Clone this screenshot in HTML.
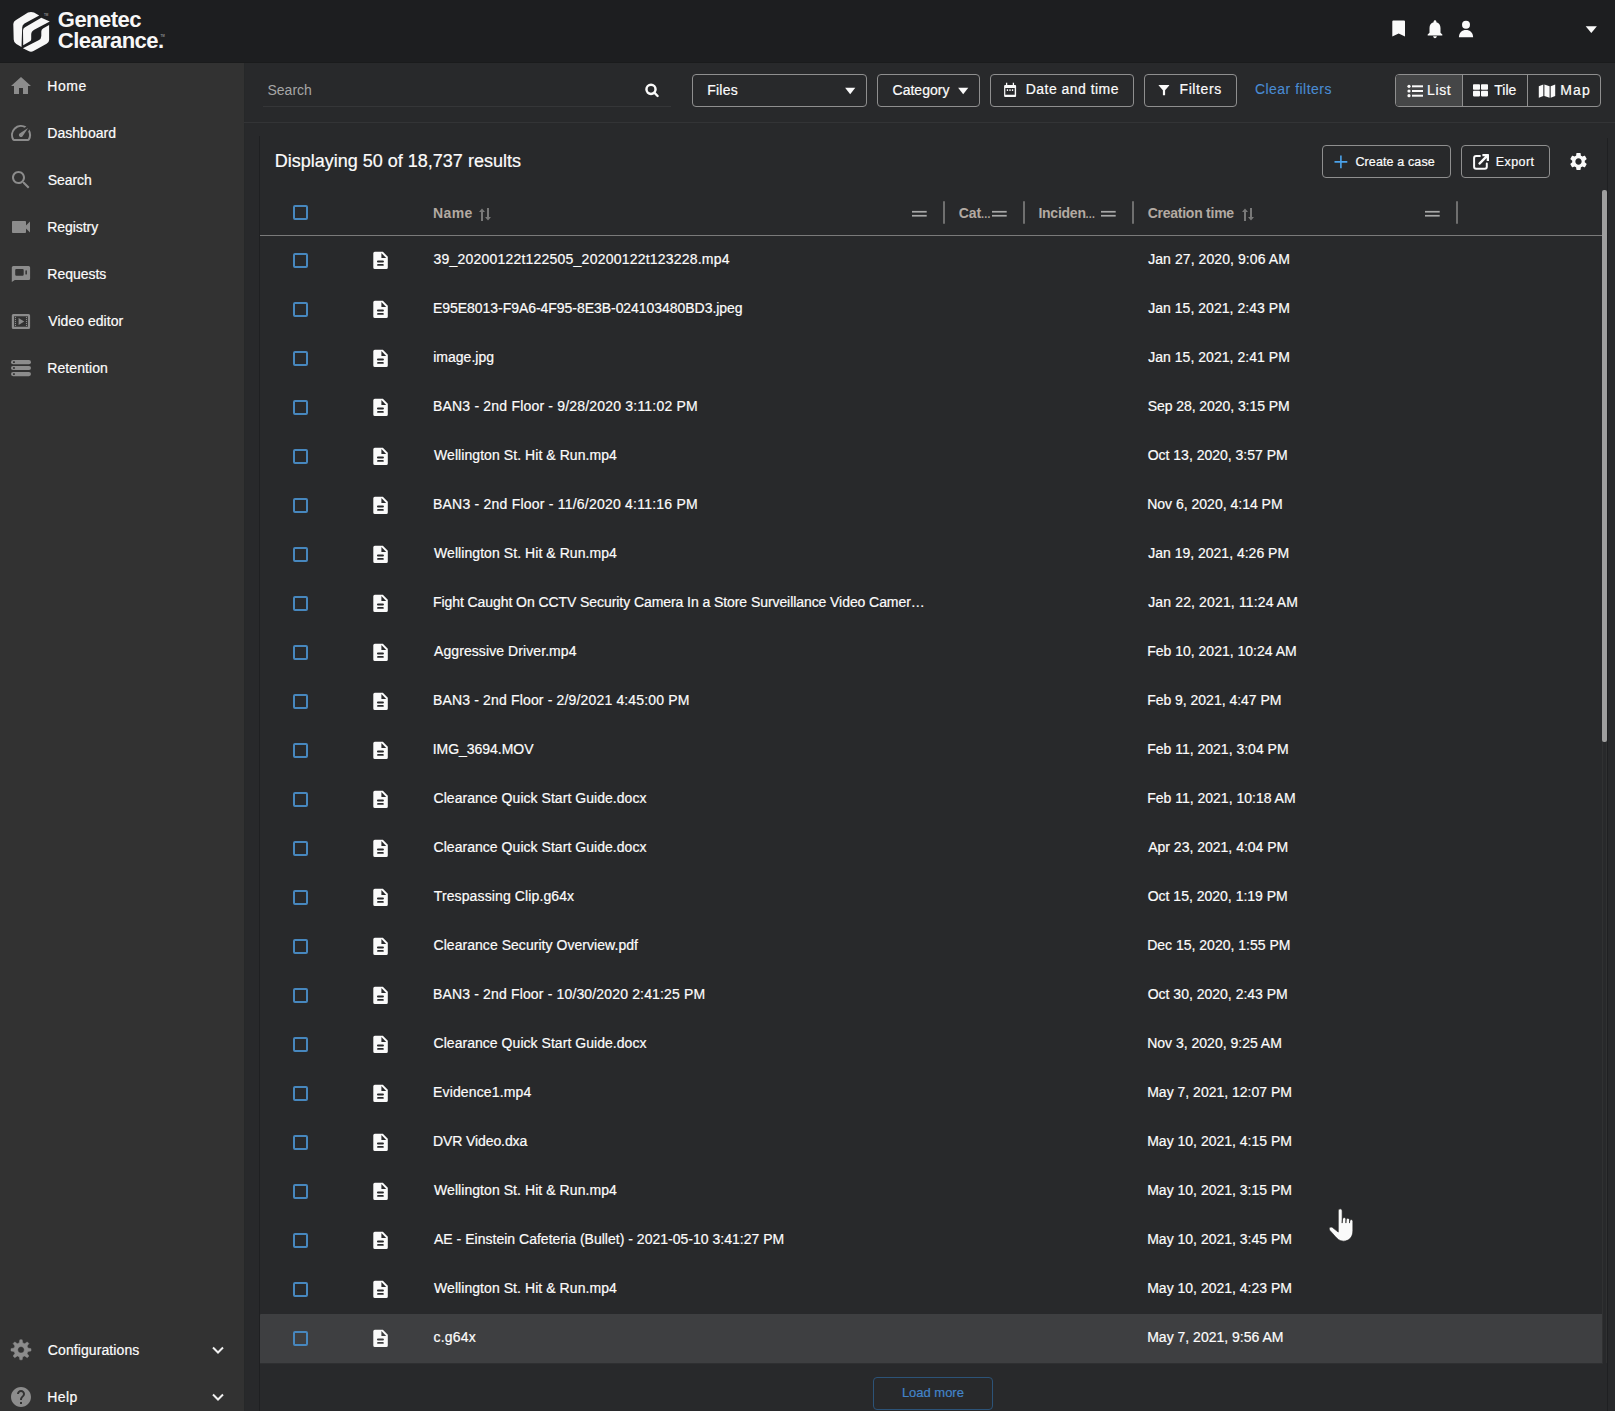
<!DOCTYPE html>
<html><head><meta charset="utf-8"><style>
*{box-sizing:border-box;margin:0;padding:0}
html,body{width:1615px;height:1411px;overflow:hidden;background:#28292b;font-family:"Liberation Sans",sans-serif;color:#fcfcfc}
.a{position:absolute}
.t{position:absolute;white-space:nowrap;line-height:1;-webkit-text-stroke:0.2px currentColor}
.cb{position:absolute;left:293px;width:15.3px;height:15.3px;border:2px solid #4787be;border-radius:2px}
.sep{position:absolute;top:201px;width:2px;height:23px;background:#6f6f6f;border-radius:1px}
.eq{position:absolute;top:211px;width:14.7px;height:5.6px;border-top:1.6px solid #a4a4a4;border-bottom:1.6px solid #a4a4a4}
.btn{position:absolute;border:1px solid #8f8f8f;border-radius:4px}

</style></head><body>
<div class="a" style="left:0;top:0;width:1615px;height:63px;background:#1d1e20;border-bottom:1px solid #1a1b1c"></div>
<svg class="a" style="left:8px;top:6px" width="50" height="50" viewBox="0 0 50 50">
<g fill="#f7f7f7">
<path d="M20 6.6 Q23 5.2 26 6.6 L31.2 9.6 L16.5 17.6 Q14.2 19 14.2 21.5 L13.5 41.1 L8.3 38 Q5.7 36.4 5.7 33.5 L5.3 18 Q5.3 15.3 8 14 Z"/>
<path d="M33.3 11.7 L41.8 15.6 L26.2 23.8 Q23.2 25.4 23.2 28.5 L23.2 33.2 Q23.2 34.6 22 35.3 L15.2 39.2 L15 24.5 Q15 22.3 17 21.2 Z"/>
<path d="M14.9 42.2 L30.6 34.3 Q33.3 32.9 33.3 30 L33.3 25.5 Q33.3 23.6 35 22.6 L41.1 19 L41.1 34 Q41.1 36.4 38.6 37.8 L25.5 45 Q23 46.3 20.5 45 Z"/>
</g>
<text x="36" y="10.3" font-size="3" font-family="Liberation Sans" font-weight="700" fill="#8a8a8a">TM</text>
</svg>
<svg class="a" style="left:158px;top:32px" width="10" height="6" viewBox="0 0 10 6"><text x="2.4" y="4.8" font-size="3" font-family="Liberation Sans" font-weight="700" fill="#8a8a8a">TM</text></svg>

<div class="t" style="left:57.85px;top:8.78px;font-size:22px;color:#f7f7f7;font-weight:700;-webkit-text-stroke:0;letter-spacing:-0.550px;">Genetec</div>
<div class="t" style="left:57.85px;top:29.58px;font-size:22px;color:#f7f7f7;font-weight:700;-webkit-text-stroke:0;letter-spacing:-0.567px;">Clearance.</div>
<svg class="a" style="left:1388px;top:17px" width="24" height="24" viewBox="0 0 24 24"><path fill="#fafafa" d="M4.3 4.6Q4.3 3.6 5.3 3.6H16Q17 3.6 17 4.6V19.6L10.65 16.5 4.3 19.6Z"/></svg>
<svg class="a" style="left:1423.8px;top:17.8px" width="22" height="22" viewBox="0 0 24 24"><path fill="#fafafa" d="M12 22c1.1 0 2-.9 2-2h-4c0 1.1.89 2 2 2zm6-6v-5c0-3.07-1.64-5.64-4.5-6.32V4c0-.83-.67-1.5-1.5-1.5s-1.5.67-1.5 1.5v.68C7.630 5.36 6 7.92 6 11v5l-2 2v1h16v-1l-2-2z"/></svg>
<svg class="a" style="left:1454px;top:17px" width="24" height="24" viewBox="0 0 24 24"><circle cx="12" cy="7.85" r="4" fill="#fafafa"/><path fill="#fafafa" d="M4.9 20.2C4.9 15.6 8 12.9 12 12.9S19.1 15.6 19.1 20.2Z"/></svg>
<svg class="a" style="left:1580px;top:18px" width="24" height="24" viewBox="0 0 24 24"><path fill="#fafafa" d="M5.7 8.3h11.2l-5.6 6.8z"/></svg>

<div class="a" style="left:0;top:63px;width:244px;height:1348px;background:#323232"></div>
<div class="a" style="left:244px;top:63px;width:1px;height:1348px;background:#262829"></div>
<div class="t" style="left:47.30px;top:79.15px;font-size:14px;letter-spacing:0.517px;">Home</div>
<div class="t" style="left:47.30px;top:126.15px;font-size:14px;letter-spacing:0.031px;">Dashboard</div>
<div class="t" style="left:47.80px;top:173.15px;font-size:14px;letter-spacing:-0.080px;">Search</div>
<div class="t" style="left:47.30px;top:220.15px;font-size:14px;letter-spacing:-0.071px;">Registry</div>
<div class="t" style="left:47.30px;top:267.15px;font-size:14px;letter-spacing:-0.021px;">Requests</div>
<div class="t" style="left:48.30px;top:314.15px;font-size:14px;letter-spacing:0.036px;">Video editor</div>
<div class="t" style="left:47.30px;top:361.15px;font-size:14px;letter-spacing:0.081px;">Retention</div>
<div class="t" style="left:47.80px;top:1343.15px;font-size:14px;letter-spacing:0.092px;">Configurations</div>
<div class="t" style="left:47.30px;top:1390.15px;font-size:14px;letter-spacing:0.383px;">Help</div>
<svg class="a" style="left:9px;top:74px" width="24" height="24" viewBox="0 0 24 24"><path fill="#8c8c8c" d="M10 20v-6h4v6h5v-8h3L12 3 2 12h3v8z"/></svg>
<svg class="a" style="left:9px;top:121px" width="24" height="24" viewBox="0 0 24 24"><path fill="#8c8c8c" d="M20.38 8.57l-1.23 1.85a8 8 0 0 1-.22 7.58H5.07A8 8 0 0 1 15.58 6.85l1.85-1.23A10 10 0 0 0 3.35 19a2 2 0 0 0 1.72 1h13.85a2 2 0 0 0 1.74-1 10 10 0 0 0-.27-10.44zm-9.79 6.84a2 2 0 0 0 2.83 0l5.66-8.49-8.49 5.66a2 2 0 0 0 0 2.83z"/></svg>
<svg class="a" style="left:9px;top:168px" width="24" height="24" viewBox="0 0 24 24"><path fill="#8c8c8c" d="M15.5 14h-.79l-.28-.27C15.41 12.59 16 11.11 16 9.5 16 5.91 13.09 3 9.5 3S3 5.91 3 9.5 5.91 16 9.5 16c1.61 0 3.09-.59 4.23-1.57l.27.28v.79l5 4.99L20.49 19l-4.99-5zm-6 0C7.01 14 5 11.99 5 9.5S7.01 5 9.5 5 14 7.01 14 9.5 11.99 14 9.5 14z"/></svg>
<svg class="a" style="left:9px;top:215px" width="24" height="24" viewBox="0 0 24 24"><path fill="#8c8c8c" d="M17 10.5V7c0-.55-.45-1-1-1H4c-.55 0-1 .45-1 1v10c0 .55.45 1 1 1h12c.55 0 1-.45 1-1v-3.5l4 4v-11l-4 4z"/></svg>
<svg class="a" style="left:9px;top:262px" width="24" height="24" viewBox="0 0 24 24"><path fill="#8c8c8c" fill-rule="evenodd" d="M4.3 4h15.3a1.5 1.5 0 0 1 1.5 1.5v11a1.5 1.5 0 0 1-1.5 1.5H5.8l-3 2.1V5.5a1.5 1.5 0 0 1 1.5-1.5zM7.4 6.9h6.1a1.2 1.2 0 0 1 1.2 1.2v4.4a1.2 1.2 0 0 1-1.2 1.2H7.4a1.2 1.2 0 0 1-1.2-1.2V8.1a1.2 1.2 0 0 1 1.2-1.2zM17.1 8.2h.1a.7.7 0 0 1 .7.7v3a.7.7 0 0 1-.7.7h-.1a.7.7 0 0 1-.7-.7v-3a.7.7 0 0 1 .7-.7z"/></svg>
<svg class="a" style="left:9px;top:309px" width="24" height="24" viewBox="0 0 24 24"><path fill="#8c8c8c" fill-rule="evenodd" d="M4.3 5h15.3a1.5 1.5 0 0 1 1.5 1.5v12a1.5 1.5 0 0 1-1.5 1.5H4.3a1.5 1.5 0 0 1-1.5-1.5v-12A1.5 1.5 0 0 1 4.3 5zM5.1 7.3v10.4h13.8V7.3zM9.6 8.9l5.6 3.6-5.6 3.6z"/><circle cx="6.5" cy="8.4" r="0.6" fill="#8c8c8c"/><circle cx="6.5" cy="10.4" r="0.6" fill="#8c8c8c"/><circle cx="6.5" cy="12.4" r="0.6" fill="#8c8c8c"/><circle cx="6.5" cy="14.4" r="0.6" fill="#8c8c8c"/><circle cx="6.5" cy="16.4" r="0.6" fill="#8c8c8c"/><circle cx="17.5" cy="8.4" r="0.6" fill="#8c8c8c"/><circle cx="17.5" cy="10.4" r="0.6" fill="#8c8c8c"/><circle cx="17.5" cy="12.4" r="0.6" fill="#8c8c8c"/><circle cx="17.5" cy="14.4" r="0.6" fill="#8c8c8c"/><circle cx="17.5" cy="16.4" r="0.6" fill="#8c8c8c"/></svg>
<svg class="a" style="left:9px;top:356px" width="24" height="24" viewBox="0 0 24 24"><g fill="#8c8c8c"><rect x="2" y="4" width="20" height="4.3" rx="2.15"/><rect x="2" y="10" width="20" height="4" rx="2"/><rect x="2" y="16" width="20" height="4.2" rx="2.1"/></g><rect x="4.1" y="5.3" width="1.7" height="1.7" fill="#2e2e2e"/><rect x="4.1" y="11.15" width="1.7" height="1.7" fill="#2e2e2e"/><rect x="4.1" y="17.25" width="1.7" height="1.7" fill="#2e2e2e"/></svg>
<svg class="a" style="left:9px;top:1338px" width="24" height="24" viewBox="0 0 24 24"><path fill="#8c8c8c" fill-rule="evenodd" stroke="#8c8c8c" stroke-width="0.5" stroke-linejoin="round" d="M10.30 4.90L10.85 1.80L13.15 1.80L13.70 4.90A6.9 6.9 0 0 1 15.68 5.72L18.26 3.92L19.88 5.54L18.08 8.12A6.9 6.9 0 0 1 18.90 10.10L22.00 10.65L22.00 12.95L18.90 13.50A6.9 6.9 0 0 1 18.08 15.48L19.88 18.06L18.26 19.68L15.68 17.88A6.9 6.9 0 0 1 13.70 18.70L13.15 21.80L10.85 21.80L10.30 18.70A6.9 6.9 0 0 1 8.32 17.88L5.74 19.68L4.12 18.06L5.92 15.48A6.9 6.9 0 0 1 5.10 13.50L2.00 12.95L2.00 10.65L5.10 10.10A6.9 6.9 0 0 1 5.92 8.12L4.12 5.54L5.74 3.92L8.32 5.72A6.9 6.9 0 0 1 10.30 4.90ZM12 8.5a3.3 3.3 0 1 0 0.001 0Z"/></svg>
<svg class="a" style="left:9px;top:1385px" width="24" height="24" viewBox="0 0 24 24"><path fill="#8c8c8c" d="M12 2C6.48 2 2 6.48 2 12s4.48 10 10 10 10-4.48 10-10S17.52 2 12 2zm1 17h-2v-2h2v2zm2.07-7.750l-.9.92C13.45 12.9 13 13.5 13 15h-2v-.5c0-1.1.45-2.1 1.17-2.83l1.24-1.26c.37-.36.59-.86.59-1.41 0-1.1-.9-2-2-2s-2 .9-2 2H8c0-2.21 1.79-4 4-4s4 1.79 4 4c0 .88-.36 1.68-.93 2.250z"/></svg>
<svg class="a" style="left:206px;top:1338px" width="24" height="24" viewBox="0 0 24 24"><path fill="none" stroke="#f0f0f0" stroke-width="2" d="M7 9.5l5 5 5-5"/></svg>
<svg class="a" style="left:206px;top:1385px" width="24" height="24" viewBox="0 0 24 24"><path fill="none" stroke="#f0f0f0" stroke-width="2" d="M7 9.5l5 5 5-5"/></svg>

<div class="a" style="left:244px;top:122px;width:1371px;height:1px;background:#333436"></div>
<div class="a" style="left:263px;top:106px;width:408px;height:1px;background:#353638"></div>
<svg class="a" style="left:643px;top:82px" width="17" height="17" viewBox="0 0 17 17"><circle cx="8" cy="7.35" r="4.55" fill="none" stroke="#fafafa" stroke-width="2.5"/><path d="M11.3 10.7l3.3 3.3" stroke="#fafafa" stroke-width="2.4" stroke-linecap="round"/></svg>
<div class="btn" style="left:692px;top:74px;width:175px;height:33px"></div>
<svg class="a" style="left:843px;top:85px" width="14" height="12" viewBox="0 0 14 12"><path fill="#fafafa" d="M2.1 2.8h10.2L7.2 9.3z"/></svg>
<div class="btn" style="left:877px;top:74px;width:103px;height:33px"></div>
<svg class="a" style="left:955.8px;top:85px" width="14" height="12" viewBox="0 0 14 12"><path fill="#fafafa" d="M2.1 2.8h10.2L7.2 9.3z"/></svg>
<div class="btn" style="left:990px;top:74px;width:144px;height:33px"></div>
<svg class="a" style="left:1003px;top:82px" width="14" height="16" viewBox="0 0 14 16"><path fill="#fafafa" fill-rule="evenodd" d="M2.1 2.9h10a1 1 0 0 1 1 1v10a1 1 0 0 1-1 1h-10a1 1 0 0 1-1-1v-10a1 1 0 0 1 1-1zM2.3 6v6.8h9.4V6zM2.95 0.8h1.3v2.1h-1.3zM9.75 0.8h1.3v2.1h-1.3zM3.8 7.2h1.3v1.7H3.8zM6.35 7.2h1.3v1.7H6.35zM8.9 7.2h1.3v1.7H8.9z"/></svg>
<div class="btn" style="left:1144px;top:74px;width:93px;height:33px"></div>
<svg class="a" style="left:1157px;top:83px" width="14" height="14" viewBox="0 0 14 14"><path fill="#fafafa" d="M1.9 1.9H11.9Q12.6 1.9 12.2 2.5L8.1 7.3V12Q8.1 12.3 7.8 12.3H6.2Q5.9 12.3 5.9 12V7.3L1.7 2.5Q1.2 1.9 1.9 1.9Z"/></svg>
<div class="btn" style="left:1395px;top:74px;width:206px;height:33px;overflow:hidden"><div class="a" style="left:0;top:0;width:67px;height:31px;background:#454647"></div></div>
<div class="a" style="left:1462px;top:75px;width:1px;height:31px;background:#8f8f8f"></div>
<div class="a" style="left:1527px;top:75px;width:1px;height:31px;background:#8f8f8f"></div>
<svg class="a" style="left:1406.8px;top:83.6px" width="17" height="14" viewBox="0 0 17 14"><g fill="#fafafa"><circle cx="2" cy="2.3" r="1.6"/><circle cx="2" cy="7" r="1.6"/><circle cx="2" cy="11.7" r="1.6"/><rect x="5" y="1.3" width="11" height="2"/><rect x="5" y="6" width="11" height="2"/><rect x="5" y="10.7" width="11" height="2"/></g></svg>
<svg class="a" style="left:1472px;top:83px" width="17" height="14" viewBox="0 0 17 14"><g fill="#fafafa"><rect x="1" y="1.2" width="7" height="5.6" rx=".8"/><rect x="9" y="1.2" width="7" height="5.6" rx=".8"/><rect x="1" y="7.8" width="7" height="5.6" rx=".8"/><rect x="9" y="7.8" width="7" height="5.6" rx=".8"/></g></svg>
<svg class="a" style="left:1538px;top:82.5px" width="19" height="16" viewBox="0 0 19 16"><path fill="#fafafa" d="M0.8 3.2l4.5-1.7v11.6L0.8 14.8zM6.4 1.5l5.2 1.7v11.6l-5.2-1.7zM12.7 3.2l4.5-1.7v11.6l-4.5 1.7z"/></svg>

<div class="t" style="left:267.45px;top:83.15px;font-size:14px;color:#a6a6a6;letter-spacing:0.010px;-webkit-text-stroke:0;">Search</div>
<div class="t" style="left:707.20px;top:83.15px;font-size:14px;letter-spacing:0.237px;">Files</div>
<div class="t" style="left:892.50px;top:83.15px;font-size:14px;letter-spacing:0.029px;">Category</div>
<div class="t" style="left:1025.70px;top:82.15px;font-size:14px;letter-spacing:0.471px;">Date and time</div>
<div class="t" style="left:1179.50px;top:82.15px;font-size:14px;letter-spacing:0.592px;">Filters</div>
<div class="t" style="left:1254.90px;top:82.15px;font-size:14px;color:#4a8cd4;letter-spacing:0.483px;-webkit-text-stroke:0.1px currentColor;">Clear filters</div>
<div class="t" style="left:1427.00px;top:83.15px;font-size:14px;letter-spacing:0.617px;">List</div>
<div class="t" style="left:1494.25px;top:83.15px;font-size:14px;letter-spacing:0.017px;">Tile</div>
<div class="t" style="left:1560.30px;top:83.15px;font-size:14px;letter-spacing:1.125px;">Map</div>
<div class="a" style="left:259px;top:136px;width:1px;height:1275px;background:#1f2022"></div>
<div class="a" style="left:1607px;top:138px;width:1px;height:1273px;background:#1f2022"></div>
<div class="t" style="left:274.75px;top:151.76px;font-size:18px;">Displaying 50 of 18,737 results</div>
<div class="btn" style="left:1322px;top:145px;width:129px;height:33px"></div>
<svg class="a" style="left:1333px;top:154px" width="16" height="16" viewBox="0 0 16 16"><path fill="#4ba3ec" d="M7.1 1.5h1.6v5.6h5.6v1.6H8.7v5.6H7.1V8.7H1.5V7.1h5.6z"/></svg>
<div class="btn" style="left:1461px;top:145px;width:89px;height:33px"></div>
<svg class="a" style="left:1466px;top:148px" width="30" height="28" viewBox="0 0 30 28"><path d="M13.9 8.1H10.1A2 2 0 0 0 8.1 10.1V18.8A2 2 0 0 0 10.1 20.8H18.8A2 2 0 0 0 20.8 18.8V15.4" fill="none" stroke="#fafafa" stroke-width="2" stroke-linecap="round"/><path fill="#fafafa" d="M16.4 6H22.3Q23 6 23 6.7V12.9H20.7V10L14.3 16.4Q13.6 17.1 12.9 16.4L12.6 16.1Q11.9 15.4 12.6 14.7L19 8.3H16.4Z"/></svg>
<svg class="a" style="left:1568px;top:151px" width="21" height="21" viewBox="0 0 24 24"><path fill="#fafafa" d="M19.14 12.94c.04-.3.06-.61.06-.94 0-.32-.02-.64-.07-.94l2.03-1.58c.18-.14.23-.41.12-.61l-1.92-3.32c-.12-.22-.37-.29-.59-.22l-2.39.96c-.5-.38-1.03-.7-1.62-.94l-.36-2.54c-.04-.24-.24-.41-.48-.41h-3.84c-.24 0-.43.17-.47.41l-.36 2.54c-.59.24-1.13.57-1.62.94l-2.39-.96c-.22-.08-.47 0-.59.22L2.74 8.87c-.12.21-.08.47.12.61l2.030 1.58c-.05.3-.09.63-.09.94s.02.64.07.94l-2.03 1.58c-.18.14-.23.41-.12.61l1.92 3.32c.12.22.37.29.59.22l2.39-.96c.5.38 1.03.7 1.62.94l.36 2.54c.05.24.24.41.48.41h3.84c.24 0 .44-.17.47-.41l.36-2.54c.59-.24 1.13-.56 1.62-.94l2.39.96c.22.08.47 0 .59-.22l1.92-3.32c.12-.22.07-.47-.12-.61l-2.01-1.58zM12 15.6c-1.98 0-3.6-1.62-3.6-3.6s1.62-3.6 3.6-3.6 3.6 1.62 3.6 3.6-1.62 3.6-3.6 3.6z"/></svg>
<div class="cb" style="top:205px"></div>
<svg class="a" style="left:478px;top:206.5px" width="14" height="15" viewBox="0 0 14 15"><path fill="#787878" d="M4 1.5l3 3.5H5v9H3V5H1zM10 13.5l3-3.5h-2V1H9v9H7z"/></svg>
<svg class="a" style="left:912px;top:210px" width="15" height="8" viewBox="0 0 15 8"><rect x="0" y="0.9" width="14.7" height="1.7" fill="#a8a8a8"/><rect x="0" y="4.9" width="14.7" height="1.7" fill="#a8a8a8"/></svg>
<div class="sep" style="left:943px"></div>
<svg class="a" style="left:992px;top:210px" width="15" height="8" viewBox="0 0 15 8"><rect x="0" y="0.9" width="14.7" height="1.7" fill="#a8a8a8"/><rect x="0" y="4.9" width="14.7" height="1.7" fill="#a8a8a8"/></svg>
<div class="sep" style="left:1023px"></div>
<svg class="a" style="left:1101px;top:210px" width="15" height="8" viewBox="0 0 15 8"><rect x="0" y="0.9" width="14.7" height="1.7" fill="#a8a8a8"/><rect x="0" y="4.9" width="14.7" height="1.7" fill="#a8a8a8"/></svg>
<div class="sep" style="left:1132px"></div>
<svg class="a" style="left:1240.5px;top:206.5px" width="14" height="15" viewBox="0 0 14 15"><path fill="#787878" d="M4 1.5l3 3.5H5v9H3V5H1zM10 13.5l3-3.5h-2V1H9v9H7z"/></svg>
<svg class="a" style="left:1425px;top:210px" width="15" height="8" viewBox="0 0 15 8"><rect x="0" y="0.9" width="14.7" height="1.7" fill="#a8a8a8"/><rect x="0" y="4.9" width="14.7" height="1.7" fill="#a8a8a8"/></svg>
<div class="sep" style="left:1456px"></div>
<div class="a" style="left:260px;top:235px;width:1342px;height:1px;background:#7a7a7a"></div>

<div class="t" style="left:1355.40px;top:155.82px;font-size:12.5px;letter-spacing:0.125px;">Create a case</div>
<div class="t" style="left:1495.80px;top:155.82px;font-size:12.5px;letter-spacing:0.410px;">Export</div>
<div class="t" style="left:433.10px;top:206.45px;font-size:14px;color:#b3aaa2;font-weight:700;-webkit-text-stroke:0;letter-spacing:0.383px;">Name</div>
<div class="t" style="left:958.70px;top:206.45px;font-size:14px;color:#b3aaa2;font-weight:700;-webkit-text-stroke:0;letter-spacing:-0.100px;">Cat</div>
<div class="t" style="left:980.80px;top:209.84px;font-size:10px;color:#b3aaa2;font-weight:700;-webkit-text-stroke:0;">…</div>
<div class="t" style="left:1038.40px;top:206.45px;font-size:14px;color:#b3aaa2;font-weight:700;-webkit-text-stroke:0;letter-spacing:-0.242px;">Inciden</div>
<div class="t" style="left:1085.20px;top:209.84px;font-size:10px;color:#b3aaa2;font-weight:700;-webkit-text-stroke:0;">…</div>
<div class="t" style="left:1147.70px;top:206.45px;font-size:14px;color:#b3aaa2;font-weight:700;-webkit-text-stroke:0;letter-spacing:-0.250px;">Creation time</div>
<div class="a" style="left:260px;top:1314px;width:1343px;height:49px;background:#3e3f41;border-top-left-radius:1px"></div>
<div class="a" style="left:260px;top:1363px;width:1343px;height:1px;background:#2e2f31"></div>
<div class="cb" style="top:253px"></div>
<svg class="a" style="left:372px;top:251px" width="17" height="19" viewBox="0 0 17 19"><path fill="#fafafa" fill-rule="evenodd" d="M2.8 0.8H10.9L15.8 5.7V16.6A1.5 1.5 0 0 1 14.3 18.1H2.8A1.5 1.5 0 0 1 1.3 16.6V2.3A1.5 1.5 0 0 1 2.8 0.8ZM9.4 2.1V7H14.2ZM6 9.4H10.9A1.05 1.05 0 0 1 10.9 11.5H6A1.05 1.05 0 0 1 6 9.4ZM6 13H10.9A0.9 0.9 0 0 1 10.9 14.8H6A0.9 0.9 0 0 1 6 13Z"/></svg>
<div class="t" style="left:433.50px;top:252.15px;font-size:14px;letter-spacing:0.215px;">39_20200122t122505_20200122t123228.mp4</div>
<div class="t" style="left:1148.20px;top:252.15px;font-size:14px;letter-spacing:0.075px;">Jan 27, 2020, 9:06 AM</div>
<div class="cb" style="top:302px"></div>
<svg class="a" style="left:372px;top:300px" width="17" height="19" viewBox="0 0 17 19"><path fill="#fafafa" fill-rule="evenodd" d="M2.8 0.8H10.9L15.8 5.7V16.6A1.5 1.5 0 0 1 14.3 18.1H2.8A1.5 1.5 0 0 1 1.3 16.6V2.3A1.5 1.5 0 0 1 2.8 0.8ZM9.4 2.1V7H14.2ZM6 9.4H10.9A1.05 1.05 0 0 1 10.9 11.5H6A1.05 1.05 0 0 1 6 9.4ZM6 13H10.9A0.9 0.9 0 0 1 10.9 14.8H6A0.9 0.9 0 0 1 6 13Z"/></svg>
<div class="t" style="left:433.00px;top:301.15px;font-size:14px;letter-spacing:-0.043px;">E95E8013-F9A6-4F95-8E3B-024103480BD3.jpeg</div>
<div class="t" style="left:1148.20px;top:301.15px;font-size:14px;letter-spacing:0.037px;">Jan 15, 2021, 2:43 PM</div>
<div class="cb" style="top:351px"></div>
<svg class="a" style="left:372px;top:349px" width="17" height="19" viewBox="0 0 17 19"><path fill="#fafafa" fill-rule="evenodd" d="M2.8 0.8H10.9L15.8 5.7V16.6A1.5 1.5 0 0 1 14.3 18.1H2.8A1.5 1.5 0 0 1 1.3 16.6V2.3A1.5 1.5 0 0 1 2.8 0.8ZM9.4 2.1V7H14.2ZM6 9.4H10.9A1.05 1.05 0 0 1 10.9 11.5H6A1.05 1.05 0 0 1 6 9.4ZM6 13H10.9A0.9 0.9 0 0 1 10.9 14.8H6A0.9 0.9 0 0 1 6 13Z"/></svg>
<div class="t" style="left:433.25px;top:350.15px;font-size:14px;">image.jpg</div>
<div class="t" style="left:1148.20px;top:350.15px;font-size:14px;letter-spacing:0.037px;">Jan 15, 2021, 2:41 PM</div>
<div class="cb" style="top:400px"></div>
<svg class="a" style="left:372px;top:398px" width="17" height="19" viewBox="0 0 17 19"><path fill="#fafafa" fill-rule="evenodd" d="M2.8 0.8H10.9L15.8 5.7V16.6A1.5 1.5 0 0 1 14.3 18.1H2.8A1.5 1.5 0 0 1 1.3 16.6V2.3A1.5 1.5 0 0 1 2.8 0.8ZM9.4 2.1V7H14.2ZM6 9.4H10.9A1.05 1.05 0 0 1 10.9 11.5H6A1.05 1.05 0 0 1 6 9.4ZM6 13H10.9A0.9 0.9 0 0 1 10.9 14.8H6A0.9 0.9 0 0 1 6 13Z"/></svg>
<div class="t" style="left:433.00px;top:399.15px;font-size:14px;letter-spacing:0.193px;">BAN3 - 2nd Floor - 9/28/2020 3:11:02 PM</div>
<div class="t" style="left:1147.70px;top:399.15px;font-size:14px;letter-spacing:-0.062px;">Sep 28, 2020, 3:15 PM</div>
<div class="cb" style="top:449px"></div>
<svg class="a" style="left:372px;top:447px" width="17" height="19" viewBox="0 0 17 19"><path fill="#fafafa" fill-rule="evenodd" d="M2.8 0.8H10.9L15.8 5.7V16.6A1.5 1.5 0 0 1 14.3 18.1H2.8A1.5 1.5 0 0 1 1.3 16.6V2.3A1.5 1.5 0 0 1 2.8 0.8ZM9.4 2.1V7H14.2ZM6 9.4H10.9A1.05 1.05 0 0 1 10.9 11.5H6A1.05 1.05 0 0 1 6 9.4ZM6 13H10.9A0.9 0.9 0 0 1 10.9 14.8H6A0.9 0.9 0 0 1 6 13Z"/></svg>
<div class="t" style="left:434.00px;top:448.15px;font-size:14px;letter-spacing:0.069px;">Wellington St. Hit &amp; Run.mp4</div>
<div class="t" style="left:1147.70px;top:448.15px;font-size:14px;letter-spacing:-0.005px;">Oct 13, 2020, 3:57 PM</div>
<div class="cb" style="top:498px"></div>
<svg class="a" style="left:372px;top:496px" width="17" height="19" viewBox="0 0 17 19"><path fill="#fafafa" fill-rule="evenodd" d="M2.8 0.8H10.9L15.8 5.7V16.6A1.5 1.5 0 0 1 14.3 18.1H2.8A1.5 1.5 0 0 1 1.3 16.6V2.3A1.5 1.5 0 0 1 2.8 0.8ZM9.4 2.1V7H14.2ZM6 9.4H10.9A1.05 1.05 0 0 1 10.9 11.5H6A1.05 1.05 0 0 1 6 9.4ZM6 13H10.9A0.9 0.9 0 0 1 10.9 14.8H6A0.9 0.9 0 0 1 6 13Z"/></svg>
<div class="t" style="left:433.00px;top:497.15px;font-size:14px;letter-spacing:0.220px;">BAN3 - 2nd Floor - 11/6/2020 4:11:16 PM</div>
<div class="t" style="left:1147.20px;top:497.15px;font-size:14px;">Nov 6, 2020, 4:14 PM</div>
<div class="cb" style="top:547px"></div>
<svg class="a" style="left:372px;top:545px" width="17" height="19" viewBox="0 0 17 19"><path fill="#fafafa" fill-rule="evenodd" d="M2.8 0.8H10.9L15.8 5.7V16.6A1.5 1.5 0 0 1 14.3 18.1H2.8A1.5 1.5 0 0 1 1.3 16.6V2.3A1.5 1.5 0 0 1 2.8 0.8ZM9.4 2.1V7H14.2ZM6 9.4H10.9A1.05 1.05 0 0 1 10.9 11.5H6A1.05 1.05 0 0 1 6 9.4ZM6 13H10.9A0.9 0.9 0 0 1 10.9 14.8H6A0.9 0.9 0 0 1 6 13Z"/></svg>
<div class="t" style="left:434.00px;top:546.15px;font-size:14px;letter-spacing:0.069px;">Wellington St. Hit &amp; Run.mp4</div>
<div class="t" style="left:1148.20px;top:546.15px;font-size:14px;">Jan 19, 2021, 4:26 PM</div>
<div class="cb" style="top:596px"></div>
<svg class="a" style="left:372px;top:594px" width="17" height="19" viewBox="0 0 17 19"><path fill="#fafafa" fill-rule="evenodd" d="M2.8 0.8H10.9L15.8 5.7V16.6A1.5 1.5 0 0 1 14.3 18.1H2.8A1.5 1.5 0 0 1 1.3 16.6V2.3A1.5 1.5 0 0 1 2.8 0.8ZM9.4 2.1V7H14.2ZM6 9.4H10.9A1.05 1.05 0 0 1 10.9 11.5H6A1.05 1.05 0 0 1 6 9.4ZM6 13H10.9A0.9 0.9 0 0 1 10.9 14.8H6A0.9 0.9 0 0 1 6 13Z"/></svg>
<div class="t" style="left:433.00px;top:595.15px;font-size:14px;letter-spacing:-0.072px;">Fight Caught On CCTV Security Camera In a Store Surveillance Video Camer…</div>
<div class="t" style="left:1148.20px;top:595.15px;font-size:14px;letter-spacing:0.140px;">Jan 22, 2021, 11:24 AM</div>
<div class="cb" style="top:645px"></div>
<svg class="a" style="left:372px;top:643px" width="17" height="19" viewBox="0 0 17 19"><path fill="#fafafa" fill-rule="evenodd" d="M2.8 0.8H10.9L15.8 5.7V16.6A1.5 1.5 0 0 1 14.3 18.1H2.8A1.5 1.5 0 0 1 1.3 16.6V2.3A1.5 1.5 0 0 1 2.8 0.8ZM9.4 2.1V7H14.2ZM6 9.4H10.9A1.05 1.05 0 0 1 10.9 11.5H6A1.05 1.05 0 0 1 6 9.4ZM6 13H10.9A0.9 0.9 0 0 1 10.9 14.8H6A0.9 0.9 0 0 1 6 13Z"/></svg>
<div class="t" style="left:434.00px;top:644.15px;font-size:14px;letter-spacing:0.085px;">Aggressive Driver.mp4</div>
<div class="t" style="left:1147.20px;top:644.15px;font-size:14px;">Feb 10, 2021, 10:24 AM</div>
<div class="cb" style="top:694px"></div>
<svg class="a" style="left:372px;top:692px" width="17" height="19" viewBox="0 0 17 19"><path fill="#fafafa" fill-rule="evenodd" d="M2.8 0.8H10.9L15.8 5.7V16.6A1.5 1.5 0 0 1 14.3 18.1H2.8A1.5 1.5 0 0 1 1.3 16.6V2.3A1.5 1.5 0 0 1 2.8 0.8ZM9.4 2.1V7H14.2ZM6 9.4H10.9A1.05 1.05 0 0 1 10.9 11.5H6A1.05 1.05 0 0 1 6 9.4ZM6 13H10.9A0.9 0.9 0 0 1 10.9 14.8H6A0.9 0.9 0 0 1 6 13Z"/></svg>
<div class="t" style="left:433.00px;top:693.15px;font-size:14px;letter-spacing:0.157px;">BAN3 - 2nd Floor - 2/9/2021 4:45:00 PM</div>
<div class="t" style="left:1147.20px;top:693.15px;font-size:14px;letter-spacing:-0.024px;">Feb 9, 2021, 4:47 PM</div>
<div class="cb" style="top:743px"></div>
<svg class="a" style="left:372px;top:741px" width="17" height="19" viewBox="0 0 17 19"><path fill="#fafafa" fill-rule="evenodd" d="M2.8 0.8H10.9L15.8 5.7V16.6A1.5 1.5 0 0 1 14.3 18.1H2.8A1.5 1.5 0 0 1 1.3 16.6V2.3A1.5 1.5 0 0 1 2.8 0.8ZM9.4 2.1V7H14.2ZM6 9.4H10.9A1.05 1.05 0 0 1 10.9 11.5H6A1.05 1.05 0 0 1 6 9.4ZM6 13H10.9A0.9 0.9 0 0 1 10.9 14.8H6A0.9 0.9 0 0 1 6 13Z"/></svg>
<div class="t" style="left:432.75px;top:742.15px;font-size:14px;letter-spacing:-0.036px;">IMG_3694.MOV</div>
<div class="t" style="left:1147.20px;top:742.15px;font-size:14px;">Feb 11, 2021, 3:04 PM</div>
<div class="cb" style="top:792px"></div>
<svg class="a" style="left:372px;top:790px" width="17" height="19" viewBox="0 0 17 19"><path fill="#fafafa" fill-rule="evenodd" d="M2.8 0.8H10.9L15.8 5.7V16.6A1.5 1.5 0 0 1 14.3 18.1H2.8A1.5 1.5 0 0 1 1.3 16.6V2.3A1.5 1.5 0 0 1 2.8 0.8ZM9.4 2.1V7H14.2ZM6 9.4H10.9A1.05 1.05 0 0 1 10.9 11.5H6A1.05 1.05 0 0 1 6 9.4ZM6 13H10.9A0.9 0.9 0 0 1 10.9 14.8H6A0.9 0.9 0 0 1 6 13Z"/></svg>
<div class="t" style="left:433.50px;top:791.15px;font-size:14px;letter-spacing:0.042px;">Clearance Quick Start Guide.docx</div>
<div class="t" style="left:1147.20px;top:791.15px;font-size:14px;">Feb 11, 2021, 10:18 AM</div>
<div class="cb" style="top:841px"></div>
<svg class="a" style="left:372px;top:839px" width="17" height="19" viewBox="0 0 17 19"><path fill="#fafafa" fill-rule="evenodd" d="M2.8 0.8H10.9L15.8 5.7V16.6A1.5 1.5 0 0 1 14.3 18.1H2.8A1.5 1.5 0 0 1 1.3 16.6V2.3A1.5 1.5 0 0 1 2.8 0.8ZM9.4 2.1V7H14.2ZM6 9.4H10.9A1.05 1.05 0 0 1 10.9 11.5H6A1.05 1.05 0 0 1 6 9.4ZM6 13H10.9A0.9 0.9 0 0 1 10.9 14.8H6A0.9 0.9 0 0 1 6 13Z"/></svg>
<div class="t" style="left:433.50px;top:840.15px;font-size:14px;letter-spacing:0.042px;">Clearance Quick Start Guide.docx</div>
<div class="t" style="left:1148.20px;top:840.15px;font-size:14px;">Apr 23, 2021, 4:04 PM</div>
<div class="cb" style="top:890px"></div>
<svg class="a" style="left:372px;top:888px" width="17" height="19" viewBox="0 0 17 19"><path fill="#fafafa" fill-rule="evenodd" d="M2.8 0.8H10.9L15.8 5.7V16.6A1.5 1.5 0 0 1 14.3 18.1H2.8A1.5 1.5 0 0 1 1.3 16.6V2.3A1.5 1.5 0 0 1 2.8 0.8ZM9.4 2.1V7H14.2ZM6 9.4H10.9A1.05 1.05 0 0 1 10.9 11.5H6A1.05 1.05 0 0 1 6 9.4ZM6 13H10.9A0.9 0.9 0 0 1 10.9 14.8H6A0.9 0.9 0 0 1 6 13Z"/></svg>
<div class="t" style="left:433.75px;top:889.15px;font-size:14px;letter-spacing:0.118px;">Trespassing Clip.g64x</div>
<div class="t" style="left:1147.70px;top:889.15px;font-size:14px;">Oct 15, 2020, 1:19 PM</div>
<div class="cb" style="top:939px"></div>
<svg class="a" style="left:372px;top:937px" width="17" height="19" viewBox="0 0 17 19"><path fill="#fafafa" fill-rule="evenodd" d="M2.8 0.8H10.9L15.8 5.7V16.6A1.5 1.5 0 0 1 14.3 18.1H2.8A1.5 1.5 0 0 1 1.3 16.6V2.3A1.5 1.5 0 0 1 2.8 0.8ZM9.4 2.1V7H14.2ZM6 9.4H10.9A1.05 1.05 0 0 1 10.9 11.5H6A1.05 1.05 0 0 1 6 9.4ZM6 13H10.9A0.9 0.9 0 0 1 10.9 14.8H6A0.9 0.9 0 0 1 6 13Z"/></svg>
<div class="t" style="left:433.50px;top:938.15px;font-size:14px;letter-spacing:0.045px;">Clearance Security Overview.pdf</div>
<div class="t" style="left:1147.20px;top:938.15px;font-size:14px;">Dec 15, 2020, 1:55 PM</div>
<div class="cb" style="top:988px"></div>
<svg class="a" style="left:372px;top:986px" width="17" height="19" viewBox="0 0 17 19"><path fill="#fafafa" fill-rule="evenodd" d="M2.8 0.8H10.9L15.8 5.7V16.6A1.5 1.5 0 0 1 14.3 18.1H2.8A1.5 1.5 0 0 1 1.3 16.6V2.3A1.5 1.5 0 0 1 2.8 0.8ZM9.4 2.1V7H14.2ZM6 9.4H10.9A1.05 1.05 0 0 1 10.9 11.5H6A1.05 1.05 0 0 1 6 9.4ZM6 13H10.9A0.9 0.9 0 0 1 10.9 14.8H6A0.9 0.9 0 0 1 6 13Z"/></svg>
<div class="t" style="left:433.00px;top:987.15px;font-size:14px;letter-spacing:0.153px;">BAN3 - 2nd Floor - 10/30/2020 2:41:25 PM</div>
<div class="t" style="left:1147.70px;top:987.15px;font-size:14px;">Oct 30, 2020, 2:43 PM</div>
<div class="cb" style="top:1037px"></div>
<svg class="a" style="left:372px;top:1035px" width="17" height="19" viewBox="0 0 17 19"><path fill="#fafafa" fill-rule="evenodd" d="M2.8 0.8H10.9L15.8 5.7V16.6A1.5 1.5 0 0 1 14.3 18.1H2.8A1.5 1.5 0 0 1 1.3 16.6V2.3A1.5 1.5 0 0 1 2.8 0.8ZM9.4 2.1V7H14.2ZM6 9.4H10.9A1.05 1.05 0 0 1 10.9 11.5H6A1.05 1.05 0 0 1 6 9.4ZM6 13H10.9A0.9 0.9 0 0 1 10.9 14.8H6A0.9 0.9 0 0 1 6 13Z"/></svg>
<div class="t" style="left:433.50px;top:1036.15px;font-size:14px;letter-spacing:0.042px;">Clearance Quick Start Guide.docx</div>
<div class="t" style="left:1147.20px;top:1036.15px;font-size:14px;">Nov 3, 2020, 9:25 AM</div>
<div class="cb" style="top:1086px"></div>
<svg class="a" style="left:372px;top:1084px" width="17" height="19" viewBox="0 0 17 19"><path fill="#fafafa" fill-rule="evenodd" d="M2.8 0.8H10.9L15.8 5.7V16.6A1.5 1.5 0 0 1 14.3 18.1H2.8A1.5 1.5 0 0 1 1.3 16.6V2.3A1.5 1.5 0 0 1 2.8 0.8ZM9.4 2.1V7H14.2ZM6 9.4H10.9A1.05 1.05 0 0 1 10.9 11.5H6A1.05 1.05 0 0 1 6 9.4ZM6 13H10.9A0.9 0.9 0 0 1 10.9 14.8H6A0.9 0.9 0 0 1 6 13Z"/></svg>
<div class="t" style="left:433.00px;top:1085.15px;font-size:14px;letter-spacing:0.146px;">Evidence1.mp4</div>
<div class="t" style="left:1147.20px;top:1085.15px;font-size:14px;">May 7, 2021, 12:07 PM</div>
<div class="cb" style="top:1135px"></div>
<svg class="a" style="left:372px;top:1133px" width="17" height="19" viewBox="0 0 17 19"><path fill="#fafafa" fill-rule="evenodd" d="M2.8 0.8H10.9L15.8 5.7V16.6A1.5 1.5 0 0 1 14.3 18.1H2.8A1.5 1.5 0 0 1 1.3 16.6V2.3A1.5 1.5 0 0 1 2.8 0.8ZM9.4 2.1V7H14.2ZM6 9.4H10.9A1.05 1.05 0 0 1 10.9 11.5H6A1.05 1.05 0 0 1 6 9.4ZM6 13H10.9A0.9 0.9 0 0 1 10.9 14.8H6A0.9 0.9 0 0 1 6 13Z"/></svg>
<div class="t" style="left:433.00px;top:1134.15px;font-size:14px;letter-spacing:-0.100px;">DVR Video.dxa</div>
<div class="t" style="left:1147.20px;top:1134.15px;font-size:14px;">May 10, 2021, 4:15 PM</div>
<div class="cb" style="top:1184px"></div>
<svg class="a" style="left:372px;top:1182px" width="17" height="19" viewBox="0 0 17 19"><path fill="#fafafa" fill-rule="evenodd" d="M2.8 0.8H10.9L15.8 5.7V16.6A1.5 1.5 0 0 1 14.3 18.1H2.8A1.5 1.5 0 0 1 1.3 16.6V2.3A1.5 1.5 0 0 1 2.8 0.8ZM9.4 2.1V7H14.2ZM6 9.4H10.9A1.05 1.05 0 0 1 10.9 11.5H6A1.05 1.05 0 0 1 6 9.4ZM6 13H10.9A0.9 0.9 0 0 1 10.9 14.8H6A0.9 0.9 0 0 1 6 13Z"/></svg>
<div class="t" style="left:434.00px;top:1183.15px;font-size:14px;letter-spacing:0.065px;">Wellington St. Hit &amp; Run.mp4</div>
<div class="t" style="left:1147.20px;top:1183.15px;font-size:14px;">May 10, 2021, 3:15 PM</div>
<div class="cb" style="top:1233px"></div>
<svg class="a" style="left:372px;top:1231px" width="17" height="19" viewBox="0 0 17 19"><path fill="#fafafa" fill-rule="evenodd" d="M2.8 0.8H10.9L15.8 5.7V16.6A1.5 1.5 0 0 1 14.3 18.1H2.8A1.5 1.5 0 0 1 1.3 16.6V2.3A1.5 1.5 0 0 1 2.8 0.8ZM9.4 2.1V7H14.2ZM6 9.4H10.9A1.05 1.05 0 0 1 10.9 11.5H6A1.05 1.05 0 0 1 6 9.4ZM6 13H10.9A0.9 0.9 0 0 1 10.9 14.8H6A0.9 0.9 0 0 1 6 13Z"/></svg>
<div class="t" style="left:434.00px;top:1232.15px;font-size:14px;letter-spacing:0.016px;">AE - Einstein Cafeteria (Bullet) - 2021-05-10 3:41:27 PM</div>
<div class="t" style="left:1147.20px;top:1232.15px;font-size:14px;">May 10, 2021, 3:45 PM</div>
<div class="cb" style="top:1282px"></div>
<svg class="a" style="left:372px;top:1280px" width="17" height="19" viewBox="0 0 17 19"><path fill="#fafafa" fill-rule="evenodd" d="M2.8 0.8H10.9L15.8 5.7V16.6A1.5 1.5 0 0 1 14.3 18.1H2.8A1.5 1.5 0 0 1 1.3 16.6V2.3A1.5 1.5 0 0 1 2.8 0.8ZM9.4 2.1V7H14.2ZM6 9.4H10.9A1.05 1.05 0 0 1 10.9 11.5H6A1.05 1.05 0 0 1 6 9.4ZM6 13H10.9A0.9 0.9 0 0 1 10.9 14.8H6A0.9 0.9 0 0 1 6 13Z"/></svg>
<div class="t" style="left:434.00px;top:1281.15px;font-size:14px;letter-spacing:0.065px;">Wellington St. Hit &amp; Run.mp4</div>
<div class="t" style="left:1147.20px;top:1281.15px;font-size:14px;">May 10, 2021, 4:23 PM</div>
<div class="cb" style="top:1331px"></div>
<svg class="a" style="left:372px;top:1329px" width="17" height="19" viewBox="0 0 17 19"><path fill="#fafafa" fill-rule="evenodd" d="M2.8 0.8H10.9L15.8 5.7V16.6A1.5 1.5 0 0 1 14.3 18.1H2.8A1.5 1.5 0 0 1 1.3 16.6V2.3A1.5 1.5 0 0 1 2.8 0.8ZM9.4 2.1V7H14.2ZM6 9.4H10.9A1.05 1.05 0 0 1 10.9 11.5H6A1.05 1.05 0 0 1 6 9.4ZM6 13H10.9A0.9 0.9 0 0 1 10.9 14.8H6A0.9 0.9 0 0 1 6 13Z"/></svg>
<div class="t" style="left:433.50px;top:1330.15px;font-size:14px;letter-spacing:0.210px;">c.g64x</div>
<div class="t" style="left:1147.20px;top:1330.15px;font-size:14px;">May 7, 2021, 9:56 AM</div>
<div class="a" style="left:1602px;top:236px;width:1px;height:1127px;background:#303132"></div>
<div class="a" style="left:1606px;top:236px;width:1px;height:1127px;background:#303132"></div>
<div class="a" style="left:1602px;top:190px;width:5px;height:552px;background:#9e9e9e;border-radius:2px"></div>
<div class="a" style="left:873px;top:1377px;width:120px;height:33px;border:1px solid #2c5378;border-radius:4px"></div>
<div class="t" style="left:901.90px;top:1386.00px;font-size:13px;color:#4384c8;letter-spacing:-0.019px;">Load more</div>
<svg class="a" style="left:1326px;top:1205px" width="31" height="40" viewBox="0 0 24 31"><path fill="#fafafa" stroke="#222" stroke-width="0.5" d="M9.5 4.5a1.5 1.5 0 0 1 3 0v9.5l0.3-3a1.3 1.3 0 0 1 2.6 0v3l0.2-2.5a1.3 1.3 0 0 1 2.6 0v2.5l0.2-1.5a1.2 1.2 0 0 1 2.4 0v7.5c0 5-3 8-7.3 8-3 0-4.8-1.8-6.5-3.8L2.8 19.5a1.5 1.5 0 0 1 2-2.2L9.5 21z"/></svg>

</body></html>
